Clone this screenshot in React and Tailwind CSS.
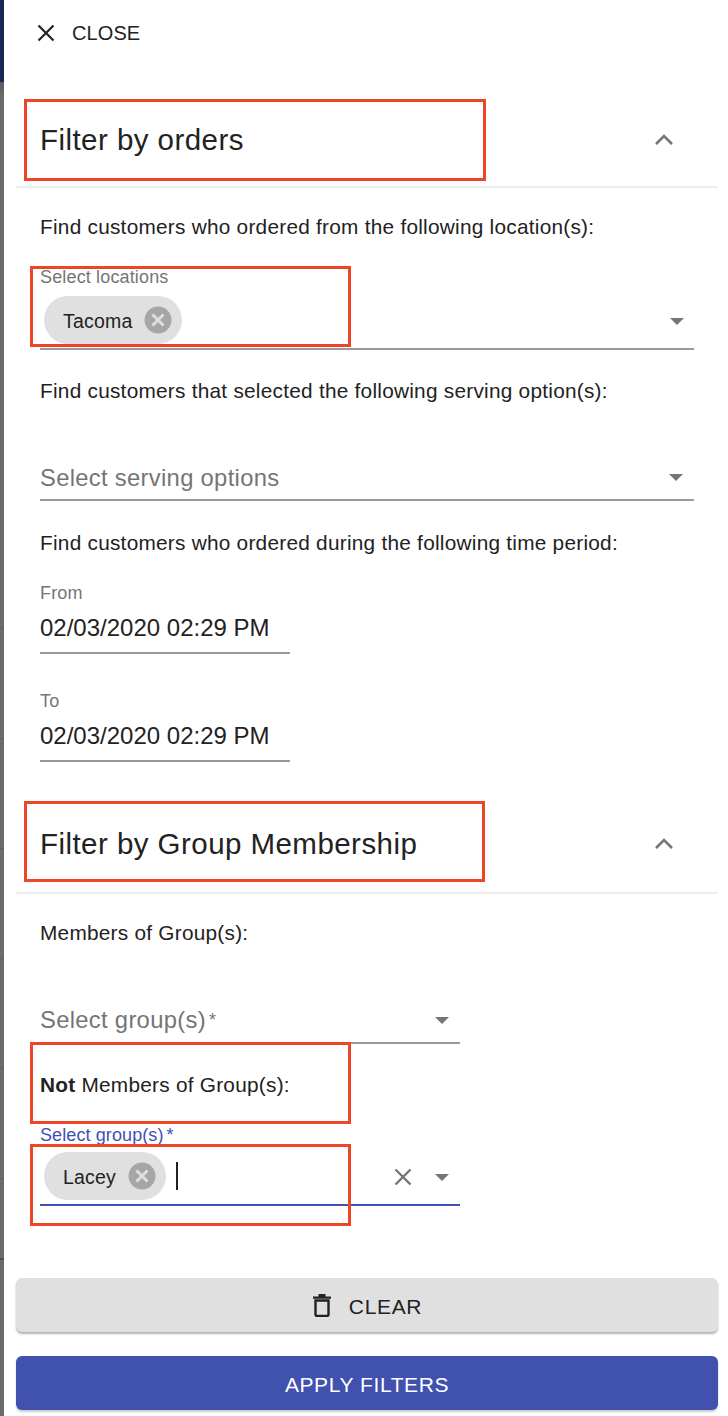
import React from "react";

const font = "font-['Liberation_Sans',Arial,sans-serif]";

function RedBox({ className }) {
  return <div className={`absolute border-[3px] border-[#ee4527] pointer-events-none ${className}`} />;
}

function Caret({ className = "" }) {
  return (
    <svg width="14" height="7" viewBox="0 0 14 7" className={className}>
      <path d="M0 0h14L7 7z" fill="#757575" />
    </svg>
  );
}

function ChevronUp() {
  return (
    <svg width="20" height="12" viewBox="0 0 20 12" className="shrink-0 mb-[2px]">
      <path d="M2 11 10 3l8 8" fill="none" stroke="#757575" strokeWidth="2.6" />
    </svg>
  );
}

function Chip({ label, width }) {
  return (
    <div className={`h-12 rounded-full bg-[#e0e0e0] flex items-center justify-between pl-[19px] pr-[10px] shrink-0 ${width}`}>
      <span className="mt-[4px] text-[19.5px] text-[#222] tracking-[0.2px]">{label}</span>
      <svg width="28" height="28" viewBox="0 0 28 28" className="shrink-0">
        <circle cx="14" cy="14" r="13.5" fill="#a6a6a6" />
        <path d="M8.5 8.5l11 11M19.5 8.5l-11 11" stroke="#e0e0e0" strokeWidth="3" />
      </svg>
    </div>
  );
}

function Heading({ children, className = "pt-[1px]" }) {
  return (
    <div className={`h-[95px] border-b-2 border-[#eeeeee] flex items-center justify-between pl-6 pr-[44px] ${className}`}>
      <h2 className="text-[29.5px] font-normal text-[#222] tracking-[0.45px] leading-8">{children}</h2>
      <ChevronUp />
    </div>
  );
}

function Line({ children, className = "" }) {
  return <p className={`text-[20.8px] leading-6 text-[#222] tracking-[0.25px] ${className}`}>{children}</p>;
}

function DateField({ label, className = "" }) {
  return (
    <div className={`w-[250px] ${className}`}>
      <div className="text-[18px] leading-5 text-[#757575] tracking-[0.15px]">{label}</div>
      <div className="h-[51px] flex items-center border-b-2 border-[#9a9a9a] text-[24px] text-[#222]">
        02/03/2020 02:29 PM
      </div>
    </div>
  );
}

export default function App() {
  return (
    <div className={`w-[728px] h-[1416px] flex bg-white overflow-hidden relative ${font}`}>
      <div className="w-1 shrink-0 flex flex-col">
        <div className="h-[82px] bg-[#1a2558]" />
        <div className="h-[546px] bg-gradient-to-b from-[#5c5c5c] to-[#6b6b6b] to-[3%]" />
        <div className="h-[110px] bg-[#6b6b6b] border-t border-[#5f5f5f]" />
        <div className="h-[110px] bg-[#6b6b6b] border-t border-[#5f5f5f]" />
        <div className="h-[110px] bg-[#6b6b6b] border-t border-[#5f5f5f]" />
        <div className="h-[110px] bg-[#6b6b6b] border-t border-[#5f5f5f]" />
        <div className="h-[110px] bg-[#6b6b6b] border-t border-[#5f5f5f]" />
        <div className="h-[80px] bg-[#6b6b6b] border-t border-[#5f5f5f]" />
        <div className="flex-1 bg-[#6b6b6b] border-t-2 border-[#4f4f4f]" />
      </div>

      <div className="flex-1 flex flex-col pl-3 pr-[10px] min-w-0">
        <div className="h-[66px] flex items-center pl-[21px] shrink-0">
          <svg width="18" height="18" viewBox="0 0 18 18">
            <path d="M1.5 1.5l15 15M16.5 1.5l-15 15" stroke="#222" strokeWidth="2.2" />
          </svg>
          <span className="ml-[17px] text-[20px] text-[#222] tracking-[0.1px]">CLOSE</span>
        </div>

        <div className="mt-[27px]">
          <Heading>Filter by orders</Heading>
        </div>

        <div className="pl-6 pr-6 flex flex-col">
          <Line className="mt-[27px]">Find customers who ordered from the following location(s):</Line>

          <div className="mt-[28px] border-b-2 border-[#9a9a9a] h-[83px] flex flex-col">
            <div className="text-[18px] leading-5 text-[#757575] tracking-[0.15px]">Select locations</div>
            <div className="pl-1 mt-[9px] flex items-center justify-between pr-[10px]">
              <Chip label="Tacoma" width="w-[138px]" />
              <Caret className="mt-[2px]" />
            </div>
          </div>

          <Line className="mt-[29px]">Find customers that selected the following serving option(s):</Line>

          <div className="mt-[52px] h-[46px] border-b-2 border-[#9a9a9a] flex items-center justify-between pr-[11px] pt-[1px]">
            <span className="text-[23.8px] text-[#757575] tracking-[0.3px]">Select serving options</span>
            <Caret />
          </div>

          <Line className="mt-[30px]">Find customers who ordered during the following time period:</Line>

          <DateField label="From" className="mt-[28px]" />
          <DateField label="To" className="mt-[37px]" />
        </div>

        <div className="mt-[37px]">
          <Heading className="pb-[3px]">Filter by Group Membership</Heading>
        </div>

        <div className="pl-6 flex flex-col w-[444px]">
          <Line className="mt-[27px]">Members of Group(s):</Line>

          <div className="mt-[53px] h-[46px] border-b-2 border-[#9a9a9a] flex items-center justify-between pr-[11px]">
            <span className="text-[23.8px] text-[#757575] tracking-[0.3px]">
              Select group(s)<span className="text-[18px] align-[2px] ml-[3px]">*</span>
            </span>
            <Caret />
          </div>

          <Line className="mt-[29px]">
            <b>Not</b> Members of Group(s):
          </Line>

          <div className="mt-[28px] text-[18px] leading-5 text-[#3f51b5] tracking-[0.1px]">
            Select group(s)<span className="ml-[3px]">*</span>
          </div>
          <div className="h-[54px] mt-[7px] border-b-2 border-[#3f51b5] pl-1 pr-[11px] flex items-start">
            <Chip label="Lacey" width="w-[122px]" />
            <div className="w-[2px] h-[28px] bg-[#222] ml-[10px] mt-[10px]" />
            <div className="ml-auto flex items-center h-12 gap-[23px] mt-[1px]">
              <svg width="18" height="18" viewBox="0 0 18 18">
                <path d="M1.5 1.5l15 15M16.5 1.5l-15 15" stroke="#757575" strokeWidth="2.4" />
              </svg>
              <Caret />
            </div>
          </div>
        </div>

        <button className="mt-[72px] h-[54px] rounded-[6px] bg-[#e0e0e0] shadow-[0_2px_2px_rgba(0,0,0,0.3)] flex items-center justify-center pt-[4px] text-[21px] text-[#222] tracking-[0.65px] shrink-0">
          <svg width="20" height="24" viewBox="0 0 20 24" className="mr-[17px] mb-[4px]">
            <path d="M3.5 7.5h13v14a1.5 1.5 0 0 1-1.5 1.5H5a1.5 1.5 0 0 1-1.5-1.5z" fill="none" stroke="#222" strokeWidth="2.4" />
            <path d="M1 3.5h18v2.2H1zM6.5 1h7v3h-7z" fill="#222" />
          </svg>
          CLEAR
        </button>
        <button className="mt-6 h-[54px] rounded-[6px] bg-[#4051ae] shadow-[0_2px_2px_rgba(0,0,0,0.2)] flex items-center justify-center pt-[4px] text-[21px] text-white tracking-[0.6px] shrink-0">
          APPLY FILTERS
        </button>
      </div>

      <RedBox className="left-[24px] top-[99px] w-[462px] h-[82px]" />
      <RedBox className="left-[30px] top-[266px] w-[321px] h-[81px]" />
      <RedBox className="left-[24px] top-[801px] w-[461px] h-[81px]" />
      <RedBox className="left-[30px] top-[1042px] w-[321px] h-[82px]" />
      <RedBox className="left-[30px] top-[1144px] w-[321px] h-[82px]" />
    </div>
  );
}
